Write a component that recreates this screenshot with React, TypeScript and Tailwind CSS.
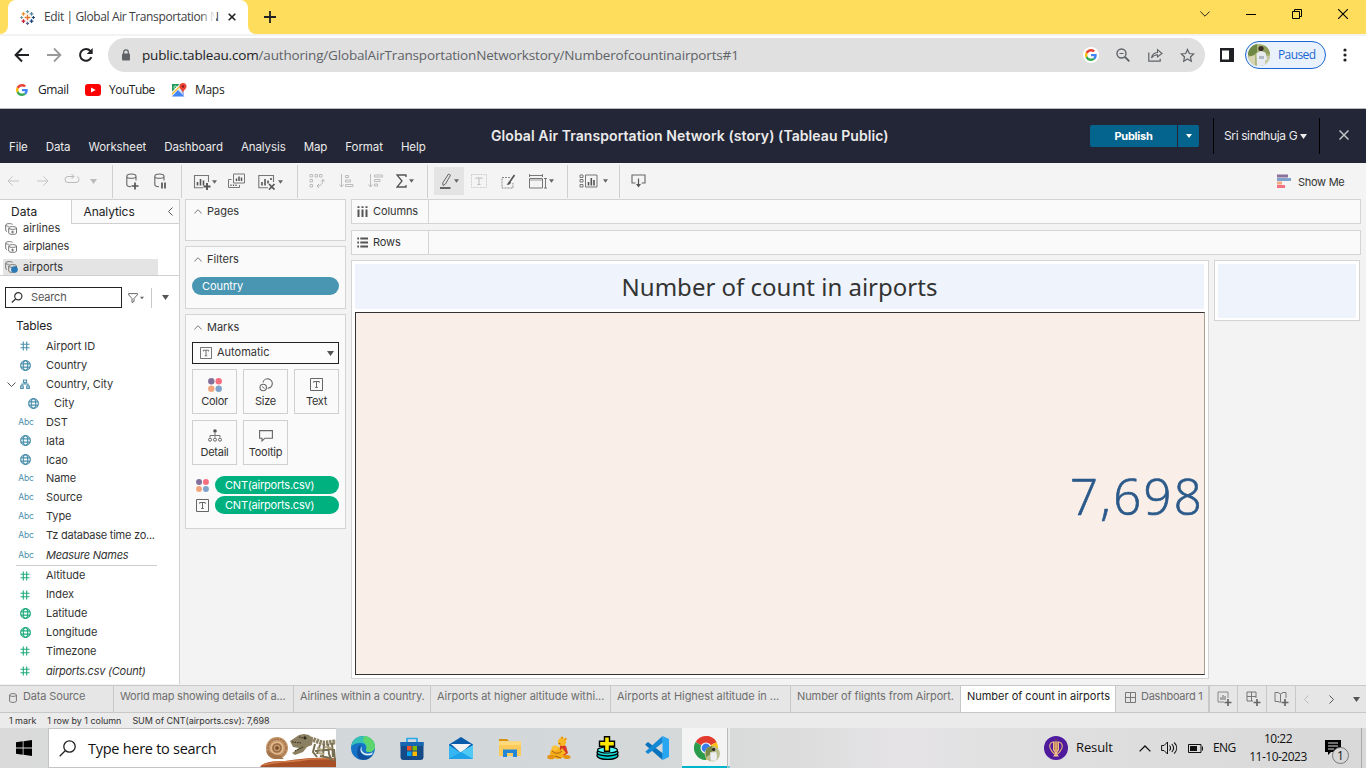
import React from "react";

type SvgProps = { w: number; h: number; vb?: string; className?: string; children: React.ReactNode };

const Svg = ({ w, h, vb, className = "", children }: SvgProps) => (
  <svg width={w} height={h} viewBox={vb ?? `0 0 ${w} ${h}`} fill="none" className={`shrink-0 ${className}`}>
    {children}
  </svg>
);

const GoogleG = ({ size }: { size: number }) => (
  <Svg w={size} h={size} vb="0 0 48 48">
    <path fill="#EA4335" d="M24 9.5c3.54 0 6.71 1.22 9.21 3.6l6.85-6.85C35.9 2.38 30.47 0 24 0 14.62 0 6.51 5.38 2.56 13.22l7.98 6.19C12.43 13.72 17.74 9.5 24 9.5z" />
    <path fill="#4285F4" d="M46.98 24.55c0-1.57-.15-3.09-.38-4.55H24v9.02h12.94c-.58 2.96-2.26 5.48-4.78 7.18l7.73 6c4.51-4.18 7.09-10.36 7.09-17.65z" />
    <path fill="#FBBC05" d="M10.53 28.59c-.48-1.45-.76-2.99-.76-4.59s.27-3.14.76-4.59l-7.98-6.19C.92 16.46 0 20.12 0 24c0 3.88.92 7.54 2.56 10.78l7.97-6.19z" />
    <path fill="#34A853" d="M24 48c6.48 0 11.93-2.13 15.89-5.81l-7.73-6c-2.15 1.45-4.92 2.3-8.16 2.3-6.26 0-11.57-4.22-13.47-9.91l-7.98 6.19C6.51 42.62 14.62 48 24 48z" />
  </Svg>
);

const Caret = ({ color = "#666", w = 5 }: { color?: string; w?: number }) => (
  <Svg w={w} h={4} vb="0 0 6 4">
    <path d="M0 0h6L3 4z" fill={color} />
  </Svg>
);

/* ---------- Browser ---------- */

const TableauMark = () => (
  <Svg w={15} h={15} vb="0 0 16 16">
    <path d="M8 5v6M5 8h6" stroke="#e8762d" strokeWidth="1.5" />
    <path d="M8 0v3.4M6.3 1.7h3.4" stroke="#7199a6" strokeWidth="1.2" />
    <path d="M8 12.6V16M6.3 14.3h3.4" stroke="#5b6591" strokeWidth="1.2" />
    <path d="M1.7 6.3v3.4M0 8h3.4" stroke="#7199a6" strokeWidth="1.2" />
    <path d="M14.3 6.3v3.4M12.6 8H16" stroke="#1f457e" strokeWidth="1.2" />
    <path d="M3.7 2.2v4M1.7 4.2h4" stroke="#eb912c" strokeWidth="1.3" />
    <path d="M12.3 2.2v4M10.3 4.2h4" stroke="#59879b" strokeWidth="1.3" />
    <path d="M3.7 9.8v4M1.7 11.8h4" stroke="#c72035" strokeWidth="1.4" />
    <path d="M12.3 9.8v4M10.3 11.8h4" stroke="#1f457e" strokeWidth="1.4" />
  </Svg>
);

const TabStrip = () => (
  <div className="flex h-[34px] bg-[#ffdd5c]">
    <Svg w={8} h={34}><path d="M8 26v8H0a8 8 0 0 0 8-8" fill="#fff" /></Svg>
    <div className="flex w-[240px] items-center rounded-t-lg bg-white pl-3">
      <TableauMark />
      <div className="relative ml-[9px] w-[172px] whitespace-nowrap text-[12px] tracking-[-0.38px] text-[#3c4043]">
        Edit | Global Air Transportation N
        <div className="absolute inset-y-0 right-0 w-[14px] bg-gradient-to-r from-white/20 to-white" />
      </div>
      <Svg w={8} h={8} className="ml-[12px]"><path d="M.7.7l6.6 6.6M7.3.7L.7 7.3" stroke="#202124" strokeWidth="1.6" /></Svg>
    </div>
    <Svg w={8} h={34}><path d="M0 26v8h8a8 8 0 0 1-8-8" fill="#fff" /></Svg>
    <Svg w={12} h={34} className="ml-[8px]"><path d="M6 11v12M0 17h12" stroke="#202124" strokeWidth="1.8" /></Svg>
    <div className="ml-auto flex h-[28px] items-center pr-[18px]">
      <Svg w={10} h={6} className="mr-[36px]"><path d="M.3.5L5 5.2 9.7.5" stroke="#222" /></Svg>
      <Svg w={10} h={10} className="mr-[36px]"><path d="M0 5.5h10" stroke="#000" /></Svg>
      <Svg w={10} h={10} className="mr-[36px]"><path d="M.5 2.5h7v7h-7zM2.5 2.5v-2h7v7h-2" stroke="#000" /></Svg>
      <Svg w={10} h={10}><path d="M0 0l10 10M10 0L0 10" stroke="#000" strokeWidth="1.1" /></Svg>
    </div>
  </div>
);

const Avatar = ({ size }: { size: number }) => (
  <Svg w={size} h={size} vb="0 0 22 22" className="rounded-full">
    <rect width="22" height="22" fill="#a9b577" />
    <path d="M0 0h9v8L4 13 0 11z" fill="#6f8745" />
    <path d="M14 2h8v8h-6z" fill="#8c9b5a" />
    <path d="M0 13l7-2v11H0z" fill="#d8d5b4" />
    <path d="M16 12h6v10h-6z" fill="#c9c9a4" />
    <circle cx="13" cy="4.5" r="2.6" fill="#3a2c27" />
    <path d="M8.5 9.5l4-2.5 5 1.5 1.5 7-2 1v6H9z" fill="#e8ebf2" />
    <path d="M11 12h5v3h-5z" fill="#b3b8c5" />
  </Svg>
);

const AddressBar = () => (
  <div className="flex h-[38px] items-center bg-white">
    <Svg w={16} h={16} className="ml-[14px]"><path d="M15 8H2M8 1.5L1.6 8 8 14.5" stroke="#202124" strokeWidth="2" /></Svg>
    <Svg w={16} h={16} className="ml-[16px]"><path d="M1 8h13M8 1.5L14.4 8 8 14.5" stroke="#9a9a9a" strokeWidth="1.8" /></Svg>
    <Svg w={16} h={16} className="ml-[16px]">
      <path d="M13.4 10.2A5.9 5.9 0 1 1 12.4 4" stroke="#202124" strokeWidth="2" />
      <path d="M14.7 1v6H8.7z" fill="#202124" />
    </Svg>
    <div className="ml-[14px] flex h-[34px] w-[1097px] items-center rounded-full bg-[#e0e0e0] pl-[13px] pr-[10px]">
      <Svg w={10} h={12}><rect x="1" y="4.5" width="8" height="7" rx="1" fill="#5f6368" /><path d="M2.7 5V3.1a2.3 2.3 0 0 1 4.6 0V5" stroke="#5f6368" strokeWidth="1.3" /></Svg>
      <div className="ml-[11px] whitespace-nowrap text-[13.5px] tracking-[-0.17px] text-[#5f6368]">
        <span className="text-[#202124]">public.tableau.com</span>/authoring/GlobalAirTransportationNetworkstory/Numberofcountinairports#1
      </div>
      <div className="ml-auto flex h-4 w-4 items-center justify-center rounded-full bg-white"><GoogleG size={12} /></div>
      <Svg w={14} h={14} className="ml-[17px]">
        <circle cx="5.5" cy="5.5" r="4.5" stroke="#5f6368" strokeWidth="1.4" />
        <path d="M9 9l4.3 4.3" stroke="#5f6368" strokeWidth="1.9" /><path d="M3.5 5.5h4" stroke="#5f6368" />
      </Svg>
      <Svg w={15} h={14} className="ml-[18px]">
        <path d="M.8 4.5v8.7h11.4v-2.5" stroke="#5f6368" strokeWidth="1.2" />
        <path d="M3.5 10c.5-3.8 2.6-5.3 6-5.5V1.7L14 5.5 9.5 9V6.8C7 6.9 5 7.8 3.5 10z" stroke="#5f6368" strokeWidth="1.1" />
      </Svg>
      <Svg w={15} h={15} className="ml-[17px]" vb="0 0 24 24">
        <path d="M12 2.5l2.9 6.3 6.9.8-5.1 4.7 1.4 6.8L12 17.7l-6.1 3.4 1.4-6.8L2.2 9.6l6.9-.8z" stroke="#5f6368" strokeWidth="2" />
      </Svg>
    </div>
    <Svg w={14} h={14} className="ml-[15px]"><path d="M0 0h14v14H0z" fill="#202124" /><path d="M2 2.5h7v9H2z" fill="#fff" /></Svg>
    <div className="ml-[11px] flex h-7 w-[81px] items-center rounded-full border border-[#1a66d2] bg-[#e9f1fc] pl-[2px]">
      <Avatar size={22} />
      <div className="ml-2 text-xs tracking-[-0.6px] text-[#1a66d2]">Paused</div>
    </div>
    <Svg w={4} h={14} className="ml-[17px]"><circle cx="2" cy="2" r="1.6" fill="#202124" /><circle cx="2" cy="7" r="1.6" fill="#202124" /><circle cx="2" cy="12" r="1.6" fill="#202124" /></Svg>
  </div>
);

const Bookmarks = () => (
  <div className="flex h-[37px] items-center border-b border-[#b9babd] bg-white pl-[16px] text-xs text-[#202124]">
    <GoogleG size={12} />
    <div className="ml-[10px] w-[47px] tracking-[-0.4px]">Gmail</div>
    <Svg w={16} h={12}><rect width="16" height="12" rx="3" fill="#f00" /><path d="M6 3.4v5.2L10.7 6z" fill="#fff" /></Svg>
    <div className="ml-[8px] w-[63px] tracking-[-0.5px]">YouTube</div>
    <Svg w={15} h={14}>
      <rect x="0" y="1" width="12" height="12.5" rx="1" fill="#e8eaed" />
      <path d="M0 1h7.5L0 8.5z" fill="#1e9b57" /><path d="M0 13.5L6 7l6.5 6.5z" fill="#4285f4" /><path d="M0 11L9.5 2" stroke="#fbc02d" strokeWidth="1.2" />
      <path d="M8 5.5l4 4v4z" fill="#9ab5e8" />
      <path d="M11 0a3.5 3.5 0 0 1 3.5 3.5C14.5 6 11 7 11 10.5 11 7 7.5 6 7.5 3.5A3.5 3.5 0 0 1 11 0z" fill="#ea4335" /><circle cx="11" cy="3.5" r="1.2" fill="#8c1d18" />
      <circle cx="3.3" cy="4.3" r="1.3" stroke="#fff" strokeWidth=".8" />
    </Svg>
    <div className="ml-[8px] tracking-[-0.3px]">Maps</div>
  </div>
);

/* ---------- Tableau header ---------- */

const Header = () => (
  <div className="flex h-[54px] bg-[#232636] text-[12px] text-[#ebebeb]">
    <div className="flex w-[491px] items-end gap-[18px] whitespace-nowrap pb-[7px] pl-[9px] text-[11.5px] leading-[18px] tracking-[-0.08px]">
      <span>File</span><span>Data</span><span>Worksheet</span><span>Dashboard</span>
      <span>Analysis</span><span>Map</span><span>Format</span><span>Help</span>
    </div>
    <div className="flex w-[599px] items-center whitespace-nowrap pb-[2px] text-[14px] font-semibold tracking-[0.08px]">Global Air Transportation Network (story) (Tableau Public)</div>
    <div className="flex flex-1 items-center">
      <div className="flex h-[22px] w-[87px] items-center justify-center rounded-l-[2px] bg-[#05648d] text-[11px] font-bold tracking-[-0.25px] text-white">Publish</div>
      <div className="ml-px flex h-[22px] w-[21px] items-center justify-center rounded-r-[2px] bg-[#05648d]"><Caret color="#fff" w={6} /></div>
      <div className="ml-[14px] h-9 w-px bg-black" />
      <div className="ml-[10px] flex w-[95px] items-center gap-[3px] whitespace-nowrap tracking-[-0.38px]">Sri sindhuja G <Svg w={7} h={5}><path d="M0 0h7L3.5 5z" fill="#ebebeb" /></Svg></div>
      <div className="h-9 w-px bg-black" />
      <Svg w={10} h={10} className="ml-[19px] mb-[2px]"><path d="M.5.5l9 9M9.5.5l-9 9" stroke="#c4c4c8" strokeWidth="1.5" /></Svg>
    </div>
  </div>
);

const Slot = ({ className, children }: { className: string; children: React.ReactNode }) => (
  <div className={`flex h-7 shrink-0 items-center justify-center gap-[2px] ${className}`}>{children}</div>
);
const Rule = ({ className = "" }: { className?: string }) => <div className={`h-[33px] w-px shrink-0 bg-[#d0d0d0] ${className}`} />;

const Cylinder = ({ children }: { children: React.ReactNode }) => (
  <Svg w={13} h={17}>
    <path d="M10 7.5V3.2C10 1.9 8 1 5.4 1S.8 1.9.8 3.2v8.3c0 1.3 1.7 2.2 4.2 2.2M.8 3.2c0 1.2 2 2.1 4.6 2.1s4.6-.9 4.6-2.1" stroke="#666" strokeWidth="1.1" />
    {children}
  </Svg>
);

const Toolbar = () => (
  <div className="flex h-[36px] items-center bg-[#f4f4f4]">
    <Slot className="w-[26px]"><Svg w={12} h={10}><path d="M12 5H1M5.5.5L1 5l4.5 4.5" stroke="#c4c4c4" /></Svg></Slot>
    <Slot className="w-[34px]"><Svg w={12} h={10}><path d="M0 5h11M6.5.5L11 5 6.5 9.5" stroke="#c4c4c4" /></Svg></Slot>
    <Slot className="w-[24px]"><Svg w={16} h={10} className="mb-1"><path d="M10 2.5H4a3 3 0 0 0 0 6h8a3 3 0 0 0 3-3c0-1.5-.8-2.5-2-2.9M7.5 0L10 2.5 7.5 5" stroke="#bbb" /></Svg></Slot>
    <Slot className="w-[19px]"><Svg w={7} h={5}><path d="M0 0h7L3.5 5z" fill="#bbb" /></Svg></Slot>
    <Rule className="ml-[9px]" />
    <Slot className="w-[38px] pt-px"><Cylinder><path d="M9 9.5v7M5.500 13h7" stroke="#555" strokeWidth="1.7" /></Cylinder></Slot>
    <Slot className="w-[19px] pt-px"><Cylinder><path d="M8 9.5v6M11 9.5v6" stroke="#555" strokeWidth="1.7" /></Cylinder></Slot>
    <Rule className="ml-[11px]" />
    <Slot className="w-[44px] pl-px pt-[2px]">
      <Svg w={18} h={16}><path d="M15.500 8V1.5H1.5v12.200H10" stroke="#777" strokeWidth="1.1" /><path d="M4.5 8v3.5M7.500 5v6.5M10.500 6.5v5" stroke="#555" strokeWidth="1.6" /><path d="M14 9v7M10.500 12.500h7" stroke="#555" strokeWidth="1.9" /></Svg>
      <span className="-ml-px flex"><Caret w={5} /></span>
    </Slot>
    <Slot className="w-[22px] pr-px">
      <Svg w={17} h={16}><path d="M5.500 1h11v9h-11z" stroke="#777" /><path d="M8.500 5.500V8M11 3.500V8M13.500 4.500V8" stroke="#555" strokeWidth="1.5" /><path d="M3.500 6.500h-3v8h11V12" stroke="#777" /><path d="M3 11.500V13M5.500 11.500V13M8 11.500V13" stroke="#555" strokeWidth="1.2" /></Svg>
    </Slot>
    <Slot className="w-[46px] pr-px pt-[2px]">
      <Svg w={18} h={16}><path d="M15.500 8V1.500H.8v12.200H10" stroke="#777" strokeWidth="1.1" /><path d="M4 8v3.500M7 5v6.500M10 6.500v3M13 4v2" stroke="#555" strokeWidth="1.6" /><path d="M11 10l5.500 5.500M16.500 10L11 15.500" stroke="#555" strokeWidth="1.7" /></Svg>
      <Caret w={5} />
    </Slot>
    <Rule className="ml-[3px]" />
    <Slot className="w-[38px]">
      <Svg w={16} h={16}><path d="M1 1.5h2.500V4H1zM6 1.500h2.500V4H6zM10.500 1.500H13V4h-2.500zM1 6.500h2.500V9H1zM1 11.500h2.500V14H1z" stroke="#bcbcbc" /><path d="M14 6.500c0 4-2 6.500-6 6.500M12 8.500l2-2 2 2M10 11l-2 2 2 2" stroke="#b5b5b5" /></Svg>
    </Slot>
    <Slot className="w-[20px]">
      <Svg w={15} h={14}><path d="M2.500 0v13M.5 10.500l2 2.500 2-2.500" stroke="#bcbcbc" /><path d="M6.500 1.500h3v2h-3zM6.500 6h5v2h-5zM6.500 10.500h7.500v2H6.500z" stroke="#bcbcbc" /></Svg>
    </Slot>
    <Slot className="w-[38px]">
      <Svg w={15} h={14}><path d="M2.500 0v13M.5 10.500l2 2.500 2-2.500" stroke="#bcbcbc" /><path d="M6.500 1h8v2h-8zM6.500 5.500h5.500v2H6.500zM6.500 10h3v2h-3z" stroke="#bcbcbc" /></Svg>
    </Slot>
    <Slot className="w-[21px]">
      <Svg w={11} h={14}><path d="M10 3V1H1l5 6-5 6h9v-2" stroke="#555" strokeWidth="1.3" /></Svg>
      <Caret w={5} />
    </Slot>
    <Rule className="ml-[12px]" />
    <Slot className="ml-[6px] w-[30px] bg-[#e4e4e4]">
      <Svg w={13} h={16}><path d="M9.500 1l2 1.200L6.500 11 4 12.500 3.800 9.800z" stroke="#666" /><path d="M1 15h10.500" stroke="#555" strokeWidth="1.8" /></Svg>
      <Caret w={5} />
    </Slot>
    <Slot className="w-[30px]">
      <Svg w={16} h={14}><path d="M.5.5h15v13H.5z" stroke="#cfcfcf" strokeDasharray="2 1" /><path d="M5 5V4h6v1M8 4v6.500M6.500 10.500h3" stroke="#bbb" /></Svg>
    </Slot>
    <Slot className="w-[29px]">
      <Svg w={15} h={15}><path d="M9 3.500H1v10.500h11V9" stroke="#888" strokeDasharray="2 1" /><path d="M13.500 1L9 7.500" stroke="#555" strokeWidth="1.7" /><path d="M9 7c-2 0-1.500 2.500-3.500 3.500 2 .8 4.500 0 4.500-2.500z" fill="#555" /></Svg>
    </Slot>
    <Slot className="w-[37px]">
      <Svg w={18} h={15}><path d="M.5 4.500h13V14H.5z" stroke="#777" /><path d="M.5 1.500h13M.5 0v3M13.500 0v3M16.500 4.500V14M15 4.500h3M15 14h3" stroke="#777" /><path d="M1 6h12" stroke="#999" /></Svg>
      <Caret w={5} />
    </Slot>
    <Rule className="ml-[7px]" />
    <Slot className="w-[50px]">
      <Svg w={19} h={14}><path d="M1 1h3v2.500H1zM1 5.500h3V8H1zM1 10.500h3V13H1zM6.500 1H18v12H6.500z" stroke="#777" /><path d="M9.500 8v3.500M12.300 4v7.500M15 6v5.500" stroke="#555" strokeWidth="1.6" /></Svg>
      <span className="w-px" /><Caret w={5} />
    </Slot>
    <Rule className="ml-px" />
    <Slot className="w-[37px]">
      <Svg w={15} h={14}><path d="M4.500 9H1V1h13v8h-3.500" stroke="#666" strokeWidth="1.1" /><path d="M7.500 4.500v7" stroke="#555" strokeWidth="1.2" /><path d="M5 10h5l-2.500 3.500z" fill="#555" /></Svg>
    </Slot>
    <Svg w={14} h={14} className="ml-auto"><path d="M0 .5h11v3H0z" fill="#8a719a" /><path d="M0 4h14v3H0z" fill="#7fa3cc" /><path d="M0 7.500h5v3H0z" fill="#f2a983" /><path d="M0 11h8v3H0z" fill="#f27282" /></Svg>
    <div className="ml-[7px] mt-[2px] w-[68px] whitespace-nowrap text-[11px] tracking-[-0.28px] text-[#333]">Show Me</div>
  </div>
);

/* ---------- Data pane ---------- */

type FieldIcon = "hash" | "globe" | "abc" | "tree";

const FieldGlyph = ({ kind, color }: { kind: FieldIcon; color: string }) => {
  if (kind === "hash")
    return <Svg w={10} h={10}><path d="M3.3.5v9M6.7.5v9M.5 3.3h9M.5 6.7h9" stroke={color} strokeWidth="1.1" /></Svg>;
  if (kind === "globe")
    return <Svg w={11} h={11} vb="0 0 10 10"><circle cx="5" cy="5" r="4.4" stroke={color} strokeWidth="1.1" /><ellipse cx="5" cy="5" rx="2" ry="4.4" stroke={color} /><path d="M.8 3.5h8.4M.8 6.5h8.4" stroke={color} /></Svg>;
  if (kind === "tree")
    return <Svg w={10} h={10}><path d="M3.5 1h3v2.5h-3zM.7 7h2.5v2.4H.7zM6.8 7h2.5v2.4H6.8zM5 3.5V5M2 7V5h6v2" stroke={color} strokeWidth="1.2" /></Svg>;
  return <span className="pl-[2px] text-[8.5px] leading-none tracking-[-0.2px] text-[#4a8fab]">Abc</span>;
};

const Field = ({ kind, label, green, italic, nested, open, tight }: { kind: FieldIcon; label: string; green?: boolean; italic?: boolean; nested?: boolean; open?: boolean; tight?: boolean }) => (
  <div className={`flex h-[18.9px] items-center ${nested ? "pl-[8px]" : ""}`}>
    <div className="flex w-[16px] justify-end">
      {open && <Svg w={9} h={5}><path d="M.5.5l4 4 4-4" stroke="#555" /></Svg>}
    </div>
    <div className="flex w-[18px] items-center justify-center"><FieldGlyph kind={kind} color={green ? "#1eaa7e" : "#4a8fab"} /></div>
    <div className={`ml-[12px] whitespace-nowrap text-[11px] text-[#333] ${tight ? "tracking-[-0.25px]" : "tracking-[-0.08px]"} ${italic ? "italic" : ""}`}>{label}</div>
  </div>
);

const SourceGlyph = ({ active }: { active?: boolean }) => (
  <Svg w={13} h={12}>
    <path d="M2 8.5C1.2 8.3.7 8 .7 7.5V2C.7 1.2 2.3.6 4.3.6c1.5 0 2.800.3 3.3.9M.7 2.2c.3.7 1.5 1.1 3 1.2" stroke="#777" />
    <path d="M3.7 5c0-.8 1.7-1.4 3.9-1.4s3.9.6 3.9 1.4v5c0 .8-1.7 1.4-3.9 1.4S3.7 10.8 3.7 10zM3.7 5c0 .8 1.7 1.4 3.9 1.4s3.9-.6 3.9-1.4M7.6 7.5v3M6.1 9h3" stroke="#777" />
    {active && <circle cx="9.5" cy="8.5" r="3.3" fill="#2b7ab5" />}
  </Svg>
);

const DataPane = () => (
  <div className="flex w-[180px] flex-col border-r border-t border-[#d0d0d0] bg-white">
    <div className="flex h-[24px] text-[12px] text-[#222]">
      <div className="flex w-[71px] items-center pl-[11px]">Data</div>
      <div className="flex flex-1 items-center justify-between border-b border-l border-[#d0d0d0] bg-[#fafafa] pl-[11.5px] pr-[6px] tracking-[-0.1px]">
        Analytics
        <Svg w={5} h={9}><path d="M4.5.5l-4 4 4 4" stroke="#555" /></Svg>
      </div>
    </div>
    <div className="flex h-[52px] flex-col border-b border-[#d0d0d0] text-[11px] text-[#333]">
      <div className="flex h-[10px] shrink-0 items-center gap-[5px] pl-[5px] leading-[11px]"><SourceGlyph /><span className="-mt-px">airlines</span></div>
      <div className="flex h-[25px] shrink-0 items-center gap-[5px] pl-[5px] tracking-[-0.15px]"><SourceGlyph />airplanes</div>
      <div className="ml-[3px] flex h-[16px] w-[155px] shrink-0 items-center gap-[5px] bg-[#e4e4e4] pl-[2px]"><SourceGlyph active />airports</div>
    </div>
    <div className="flex h-[43px] items-center pl-[5px]">
      <div className="flex h-[21px] w-[117px] items-center border border-[#222] pl-[5px] text-[11px] text-[#555]">
        <Svg w={12} h={11}><circle cx="7.3" cy="4.3" r="3.6" stroke="#333" strokeWidth="1.2" /><path d="M4.6 7L.8 10.5" stroke="#333" strokeWidth="1.3" /></Svg>
        <span className="ml-[8px] tracking-[-0.15px]">Search</span>
      </div>
      <Svg w={10} h={10} className="ml-[6px]"><path d="M.6.6h8.8v1.2L6 5.5v3L4 9.5v-4L.6 1.8z" stroke="#666" /></Svg>
      <span className="ml-[2px]"><Caret w={4} /></span>
      <div className="ml-[7px] h-5 w-px bg-[#c9c9c9]" />
      <Svg w={7} h={5} className="ml-[10px]"><path d="M0 0h7L3.5 5z" fill="#555" /></Svg>
    </div>
    <div className="mt-[-2px] flex h-[18px] items-center pl-[16px] text-[12px] tracking-[-0.15px] text-[#222]">Tables</div>
    <div className="h-[2px]" />
    <Field kind="hash" label="Airport ID" />
    <Field kind="globe" label="Country" />
    <Field kind="tree" label="Country, City" open />
    <Field kind="globe" label="City" nested />
    <Field kind="abc" label="DST" />
    <Field kind="globe" label="Iata" />
    <Field kind="globe" label="Icao" />
    <Field kind="abc" label="Name" />
    <Field kind="abc" label="Source" />
    <Field kind="abc" label="Type" />
    <Field kind="abc" label="Tz database time zo..." tight />
    <div className="h-px" />
    <Field kind="abc" label="Measure Names" italic tight />
    <div className="ml-[16px] mb-[0.6px] h-px w-[141px] bg-[#ccc]" />
    <Field kind="hash" label="Altitude" green />
    <Field kind="hash" label="Index" green />
    <Field kind="globe" label="Latitude" green />
    <Field kind="globe" label="Longitude" green />
    <Field kind="hash" label="Timezone" green />
    <div className="h-[0.6px]" />
    <Field kind="hash" label="airports.csv (Count)" green italic tight />
  </div>
);

/* ---------- Shelves ---------- */

const Shelf = ({ title, className, titleHeight = "h-[24px]", children }: { title: string; className: string; titleHeight?: string; children?: React.ReactNode }) => (
  <div className={`flex flex-col border border-[#d4d4d4] bg-[#fafafa] px-[6px] ${className}`}>
    <div className={`flex shrink-0 items-center gap-[5px] pl-[2px] text-[11px] text-[#333] ${titleHeight}`}>
      <Svg w={8} h={5}><path d="M.3 4.5L4 .7l3.7 3.8" stroke="#777" /></Svg>
      {title}
    </div>
    {children}
  </div>
);

const Dots = ({ size }: { size: number }) => (
  <Svg w={size} h={size} vb="0 0 14 14">
    <circle cx="3.3" cy="3.3" r="3.2" fill="#83709a" /><circle cx="10.7" cy="3.3" r="3.2" fill="#f56f80" />
    <circle cx="3.3" cy="10.7" r="3.2" fill="#f2a57d" /><circle cx="10.7" cy="10.7" r="3.2" fill="#7fa3cc" />
  </Svg>
);

const TextMark = ({ size }: { size: number }) => (
  <Svg w={size} h={size} vb="0 0 13 13"><path d="M.5.5h12v12H.5z" stroke="#666" /><path d="M3.7 4.8V3.5h5.6v1.3M6.5 3.5v6M5.2 9.5h2.6" stroke="#666" /></Svg>
);

const MarkCard = ({ label, children }: { label: string; children: React.ReactNode }) => (
  <div className="flex h-[45px] flex-col items-center border border-[#d0d0d0] bg-[#fafafa] pt-[7px] text-[11px] leading-[16px] tracking-[-0.28px] text-[#333]">
    <div className="flex h-[15px] items-center">{children}</div>
    <span className="mt-[0.5px]">{label}</span>
  </div>
);

const MeasurePill = () => (
  <div className="flex h-[18px] w-[124px] items-center rounded-full bg-[#00b180] pl-[10px] text-[11px] tracking-[-0.22px] text-white">CNT(airports.csv)</div>
);

const ShelfColumn = () => (
  <div className="ml-[5px] flex w-[161px] flex-col">
    <Shelf title="Pages" titleHeight="h-[22px]" className="h-[42px]" />
    <Shelf title="Filters" className="mt-[5px] h-[63px]">
      <div className="mt-[6px] flex h-[18px] items-center rounded-full bg-[#4996b2] pl-[10px] text-[11px] tracking-[-0.08px] text-white">Country</div>
    </Shelf>
    <Shelf title="Marks" className="mt-[5px] h-[215px]">
      <div className="mt-[3px] flex h-[22px] shrink-0 items-center border border-[#222] bg-[#fcfcfc] pl-[7px] pr-[4px] text-[11px] text-[#333]">
        <TextMark size={12} /><span className="mb-px ml-[5px]">Automatic</span>
        <Svg w={7} h={5} className="ml-auto"><path d="M0 0h7L3.5 5z" fill="#555" /></Svg>
      </div>
      <div className="mt-[5px] grid grid-cols-3 gap-[6px]">
        <MarkCard label="Color"><Dots size={14} /></MarkCard>
        <MarkCard label="Size"><Svg w={14} h={14}><path d="M4 4.5a4.7 4.7 0 1 1 4.5 5.7" stroke="#666" strokeWidth="1.1" /><circle cx="4.2" cy="9.5" r="3.2" stroke="#666" strokeWidth="1.1" /><path d="M3 8.5l2.5 2" stroke="#666" /></Svg></MarkCard>
        <MarkCard label="Text"><TextMark size={13} /></MarkCard>
        <MarkCard label="Detail"><Svg w={14} h={13}><circle cx="7" cy="2" r="1.8" fill="#555" /><path d="M7 4v4.5M2 8.5v-2h10v2" stroke="#777" /><circle cx="2" cy="10.7" r="1.5" stroke="#666" /><circle cx="7" cy="10.7" r="1.5" stroke="#666" /><circle cx="12" cy="10.7" r="1.5" stroke="#666" /></Svg></MarkCard>
        <MarkCard label="Tooltip"><Svg w={14} h={12}><path d="M.6.6h12.8v7.6H6L3 11V8.2H.6z" stroke="#666" strokeWidth="1.1" /></Svg></MarkCard>
      </div>
      <div className="mt-[11px] flex items-center gap-[6px] pl-[4px]"><Dots size={13} /><MeasurePill /></div>
      <div className="mt-[2px] flex items-center gap-[6px] pl-[4px]"><TextMark size={13} /><MeasurePill /></div>
    </Shelf>
  </div>
);

const AxisShelf = ({ label, children }: { label: string; children: React.ReactNode }) => (
  <div className="flex h-[25px] border border-[#d4d4d4] bg-[#fafafa]">
    <div className="flex w-[77px] items-center gap-[5px] border-r border-[#d4d4d4] pl-[5px] text-[11px] tracking-[-0.1px] text-[#333]">{children}{label}</div>
  </div>
);

const Canvas = () => (
  <div className="ml-[5px] flex w-[1010px] flex-col">
    <AxisShelf label="Columns"><Svg w={11} h={11}><path d="M1.5 3.5V11M5.5 3.5V11M9.5 3.5V11M1.5.3V2M5.5.3V2M9.5.3V2" stroke="#555" strokeWidth="2" /></Svg></AxisShelf>
    <div className="h-[6px]" />
    <AxisShelf label="Rows"><Svg w={11} h={11}><path d="M3.3 1.5H11M3.3 5.5H11M3.3 9.5H11M.3 1.5H2M.3 5.5H2M.3 9.5H2" stroke="#555" strokeWidth="2" /></Svg></AxisShelf>
    <div className="mt-[5px] flex items-start">
      <div className="flex h-[419px] w-[858px] flex-col border border-[#d4d4d4] bg-white p-[3px]">
        <div className="mr-px flex h-[45px] items-center justify-center bg-[#eff3fb] font-['Noto_Sans'] text-[24px] text-[#333]">Number of count in airports</div>
        <div className="mt-[3px] flex h-[363px] items-center justify-end border border-[#333] border-r-[#a59f97] bg-[#f9eee8] font-['Open_Sans'] text-[49px] font-light text-[#2b5a8a]">
          <span className="mt-[7px] tracking-[2.3px] [-webkit-text-stroke:0.7px_#2b5a8a]">7,698</span>
        </div>
      </div>
      <div className="ml-[5px] h-[61px] w-[146px] border border-[#d4d4d4] bg-white p-[3px] pb-[2px]"><div className="h-full w-[138px] bg-[#eff3fb]" /></div>
    </div>
  </div>
);

/* ---------- Sheet tabs and status ---------- */

const SheetTab = ({ className, children }: { className: string; children: React.ReactNode }) => (
  <div className={`flex shrink-0 items-center whitespace-nowrap border-r border-[#c8c8c8] pb-[5px] ${className}`}>{children}</div>
);

const PlusMark = () => <path d="M11 8v7M7.5 11.5h7" stroke="#666" strokeWidth="1.7" />;

const SheetTabs = () => (
  <div className="flex h-[28px] border-b border-t border-[#c8c8c8] bg-[#e6e6e6] text-[11px] tracking-[-0.05px] text-[#6e6e6e]">
    <SheetTab className="w-[114px] gap-[6px] pl-[9px] tracking-[-0.15px]">
      <Svg w={8} h={10} className="mt-[3px]"><path d="M.6 2C.6 1.2 2.1.6 4 .6s3.4.6 3.4 1.4v6C7.4 8.8 5.9 9.4 4 9.4S.6 8.8.6 8zM.6 2c0 .8 1.5 1.4 3.4 1.4S7.4 2.8 7.4 2" stroke="#777" /></Svg>
      Data Source
    </SheetTab>
    <SheetTab className="w-[180px] pl-[6px] tracking-[-0.22px]">World map showing details of a...</SheetTab>
    <SheetTab className="w-[137px] pl-[6px] tracking-[-0.12px]">Airlines within a country.</SheetTab>
    <SheetTab className="w-[180px] pl-[6px]">Airports at higher altitude withi...</SheetTab>
    <SheetTab className="w-[180px] pl-[6px]">Airports at Highest altitude in ...</SheetTab>
    <SheetTab className="w-[170px] pl-[6px] tracking-[-0.1px]">Number of flights from Airport.</SheetTab>
    <SheetTab className="w-[155px] bg-white pl-[6px] tracking-[-0.02px] text-[#222]">Number of count in airports</SheetTab>
    <SheetTab className="w-[93px] gap-[5px] pl-[9px] tracking-[-0.25px]">
      <Svg w={11} h={11} className="mt-[2px]"><path d="M.5.5h10v10H.5zM5.5.5v10M.5 5.5h10" stroke="#777" /></Svg>
      Dashboard 1
    </SheetTab>
    <SheetTab className="w-[29px] border-l pl-[7px]"><Svg w={15} h={15} className="mt-[3px]"><path d="M11 7V1H1v10h6" stroke="#888" /><path d="M4 6v3M6 4v5M8 5v4" stroke="#777" strokeWidth="1.1" /><PlusMark /></Svg></SheetTab>
    <SheetTab className="w-[29px] pl-[8px]"><Svg w={15} h={15} className="mt-[3px]"><path d="M10 7V1H1v9h6M5.500 1v9M1 5.5h9" stroke="#777" /><PlusMark /></Svg></SheetTab>
    <SheetTab className="w-[29px] pl-[7px]"><Svg w={15} h={15} className="mt-[3px]"><path d="M12 7V1.500H9L6.500 3 4 1.500H1v9h3l2.500 1M6.500 3v8" stroke="#777" /><PlusMark /></Svg></SheetTab>
    <div className="flex flex-1 items-center pl-[8px]">
      <Svg w={5} h={9}><path d="M4.5.5l-4 4 4 4" stroke="#bbb" /></Svg>
      <Svg w={5} h={9} className="ml-[20px]"><path d="M.5.5l4 4-4 4" stroke="#555" /></Svg>
      <Svg w={7} h={5} className="ml-[19px]"><path d="M0 0h7L3.5 5z" fill="#555" /></Svg>
    </div>
  </div>
);

const StatusBar = () => (
  <div className="flex h-[15px] items-center gap-[11px] whitespace-nowrap bg-[#ebebeb] pl-[9px] text-[9px] tracking-[-0.05px] text-[#333]">
    <span>1 mark</span><span>1 row by 1 column</span><span>SUM of CNT(airports.csv): 7,698</span>
  </div>
);

/* ---------- Windows taskbar ---------- */

const Fossils = () => (
  <Svg w={76} h={38} className="ml-auto">
    <path d="M0 38c3-5 13-6 25-6 13-2 30-4 51-3v9z" fill="#a84f26" />
    <path d="M3 36c12-4 30-3 40-5s20-1 33-1" stroke="#d07a48" strokeWidth="1.5" />
    <circle cx="17" cy="19" r="11" fill="#c39366" />
    <path d="M6 22a11 11 0 0 0 8 8h10l-5-4z" fill="#a8784c" />
    <circle cx="17" cy="19" r="9" stroke="#9a6e48" strokeWidth="1.3" strokeDasharray="2 1" />
    <circle cx="17" cy="19" r="6" stroke="#e0bb8f" strokeWidth="1.6" />
    <circle cx="17" cy="19" r="4" stroke="#8d6340" strokeWidth="1.2" /><circle cx="17" cy="19" r="1.8" fill="#714b2d" />
    <path d="M30 12l9-6 5-1 5 1 4 4-1 6-5 2-4 5-8 3-3-2 7-5-6-1z" fill="#8b8061" />
    <path d="M32 13l10 1M35 22l8-4M39 8l4 1 3-2" stroke="#3f3827" strokeWidth="1.2" strokeDasharray="1.5 1" />
    <circle cx="45" cy="9" r="1.5" fill="#2e291d" />
    <path d="M50 10c5 0 9 4 14 4s8-1 12-1" stroke="#8b8061" strokeWidth="5" strokeDasharray="2.5 .8" />
    <path d="M55 15l-2 8 4 5M60 16l-3 9M64 15l-1 13M68 15l1 10 3 7M72 14l1 14M60 27l10 2M55 22l18-2M74 20l1 12" stroke="#776d51" strokeWidth="2" />
    <path d="M57 19l5 2M65 18l7 1M58 24l6 1" stroke="#b4a982" strokeWidth="2" />
  </Svg>
);

const ChromeLogo = () => (
  <Svg w={26} h={26}>
    <path d="M12 12L1.6 6A12 12 0 0 1 22.4 6z" fill="#e33b2e" />
    <path d="M12 12L22.4 6A12 12 0 0 1 12 24z" fill="#fbc116" />
    <path d="M12 12v12A12 12 0 0 1 1.6 6z" fill="#2a9a4b" />
    <path d="M12 6.5h10.6A12 12 0 0 0 12 0v6.5z" fill="#e33b2e" />
    <circle cx="12" cy="12" r="5.5" fill="#fff" /><circle cx="12" cy="12" r="4.4" fill="#3b7ded" />
    <g transform="translate(10.5 10) scale(.7)">
      <circle cx="11" cy="11" r="11" fill="#b9bd90" /><path d="M2 5a11 11 0 0 1 9-5v10L2 16z" fill="#778a48" /><circle cx="13" cy="5" r="2.5" fill="#33302a" /><path d="M8 9h9l1 8-2 4H9z" fill="#eceef2" />
    </g>
  </Svg>
);

const TaskIcon = ({ className, children }: { className: string; children: React.ReactNode }) => (
  <div className={`flex h-10 shrink-0 items-center justify-center ${className}`}>{children}</div>
);

const Taskbar = () => (
  <div className="flex h-[40px] bg-[linear-gradient(90deg,#dadada_0%,#d2d7da_28%,#d4d8d9_48%,#dcdcdc_58%,#e5e3e6_66%,#e0e0e0_74%,#d8d8d8_100%)] text-[#111]">
    <TaskIcon className="w-[48px]">
      <Svg w={16} h={16}><path d="M0 2.3l6.7-1v6.3H0zM7.5 1.2L16 0v7.6H7.5zM0 8.4h6.7v6.3l-6.7-1zM7.5 8.4H16V16l-8.5-1.2z" fill="#000" /></Svg>
    </TaskIcon>
    <div className="flex w-[288px] items-center border border-r-0 border-[#c4c4c4] bg-white pl-[10px]">
      <Svg w={17} h={17}><circle cx="10.5" cy="6.5" r="5.7" stroke="#222" strokeWidth="1.3" /><path d="M6.5 10.5L.7 16.3" stroke="#222" strokeWidth="1.3" /></Svg>
      <span className="ml-[12px] mt-px whitespace-nowrap text-[14.5px] tracking-[-0.27px]">Type here to search</span>
      <Fossils />
    </div>
    <TaskIcon className="ml-[2px] w-[49px]">
      <Svg w={24} h={24}>
        <circle cx="12" cy="12" r="12" fill="#1673c5" />
        <path d="M0 11C1 4 6 0 12 0c7 0 12 5 12 10.5 0 3.5-3 5.5-6 5.5-2.5 0-3.5-1.2-3-2.2C16 12 15.5 7 9.5 7 5 7 1.5 8.5 0 11z" fill="#35c1b5" />
        <path d="M13 0c6 .4 11 5 11 10.5 0 3.5-3 5.5-6 5.5-2.5 0-3.5-1.2-3-2.2 1-1.8 1.2-6.3-3-8.3z" fill="#5fd66d" />
        <path d="M8 22.5C5 18 5.5 11 10 8.5c-2 3-1.5 8 2 10.5 3.5 2.2 7.5 1.6 10-.5-3 5-9 6.8-14 4z" fill="#0f4f9c" />
        <path d="M11 10.5c-1.5 3 .5 6.5 4 7 3 .5 5-.3 7-1.5l-1 2.5c-4 1.5-8 1-10.3-1.5-1.8-2-1.5-5.2.3-6.5z" fill="#e6eef3" />
      </Svg>
    </TaskIcon>
    <TaskIcon className="w-[49px]">
      <Svg w={24} h={25}>
        <path d="M7 7V2.5h10V7" stroke="#28a8ea" strokeWidth="1.7" /><path d="M.5 6h23v15a3 3 0 0 1-3 3h-17a3 3 0 0 1-3-3z" fill="#164a86" /><path d="M.5 6h23v4H.5z" fill="#1766b2" />
        <path d="M7 10h4.5v4.5H7z" fill="#f25022" /><path d="M12.5 10H17v4.5h-4.5z" fill="#7fba00" /><path d="M7 15.5h4.5V20H7z" fill="#00a4ef" /><path d="M12.5 15.5H17V20h-4.5z" fill="#ffb900" />
      </Svg>
    </TaskIcon>
    <TaskIcon className="w-[49px]">
      <Svg w={24} h={24}><path d="M0 8.5L12 1l12 7.5V23H0z" fill="#0a5cab" /><path d="M2 8h20l-10 9z" fill="#f3f3f3" /><path d="M0 9l12 8L0 23z" fill="#35b6f2" /><path d="M24 9v14H0l12-7z" fill="#1fa2e8" /><path d="M12 16l12 7V9z" fill="#50c8f4" /></Svg>
    </TaskIcon>
    <TaskIcon className="w-[49px] pl-px">
      <Svg w={22} h={20}><path d="M0 1h8l2 2H0z" fill="#d8920c" /><path d="M0 3.5h22V18H0z" fill="#fccb5b" /><path d="M0 3.5h22V7H0z" fill="#ffda7a" /><path d="M4 11.5h14V19h-4v-4H8v4H4z" fill="#2486d6" /></Svg>
    </TaskIcon>
    <TaskIcon className="w-[49px]">
      <Svg w={24} h={24}>
        <ellipse cx="11" cy="17" rx="8" ry="6" fill="#f6ae1a" /><path d="M13 8l6 2 2 7-4 3-4-6z" fill="#d93a25" /><path d="M15 12l4 5-3 2-3-4z" fill="#f9b824" /><circle cx="15" cy="6" r="4" fill="#f9b824" /><circle cx="15" cy="1.6" r="1.2" fill="#e89a10" /><circle cx="18.5" cy="3" r="1.2" fill="#e89a10" />
        <ellipse cx="8" cy="12" rx="3.5" ry="2.5" fill="#fbc33a" /><ellipse cx="4" cy="21" rx="3.7" ry="2.3" fill="#e69312" /><ellipse cx="20" cy="21" rx="3.5" ry="2" fill="#e69312" /><path d="M5 15c3 3 7 3 10 0M11.500 7l2 1M8 20l6 2" stroke="#a5620d" />
      </Svg>
    </TaskIcon>
    <TaskIcon className="w-[49px]">
      <Svg w={23} h={24}>
        <ellipse cx="11.5" cy="19.5" rx="10.5" ry="4" fill="#0cc" stroke="#000" strokeWidth="1.3" /><ellipse cx="11.5" cy="16.5" rx="10.5" ry="3.5" fill="#1fdede" stroke="#000" strokeWidth="1.3" /><ellipse cx="11.5" cy="14" rx="10" ry="3" fill="#5ff" stroke="#000" strokeWidth="1.2" />
        <path d="M8.500.7h5v4.500h5v5h-5v5h-5v-5h-5v-5h5z" fill="#ffe800" stroke="#000" strokeWidth="1.4" />
      </Svg>
    </TaskIcon>
    <TaskIcon className="w-[49px]">
      <Svg w={24} h={24}><path d="M17.5 24L1 9.5.3 8.2 3 6l15 11.5z" fill="#0a72bd" /><path d="M17.5 0L.3 15.8 3 18 18 6.5z" fill="#1488d4" /><path d="M17.5 0L24 3v18l-6.5 3z" fill="#2aa5f1" /></Svg>
    </TaskIcon>
    <div className="ml-px flex w-[45px] flex-col items-center bg-[#f4f4f4]">
      <div className="flex h-[38px] items-center pl-[4px] pt-[4px]"><ChromeLogo /></div>
      <div className="h-[2px] w-full bg-[#00b5c9]" />
    </div>
    <div className="flex w-[3px] flex-col border-l border-[#bbb] bg-[#e9e9e9]"><div className="mt-auto h-[2px] bg-[#69ccd6]" /></div>
    <div className="ml-auto flex items-center pr-[4px]">
      <Svg w={24} h={24}><circle cx="12" cy="12" r="12" fill="#4f1a9c" /><path d="M9 5.500h6V14l-1.500 2v2.500l1.500 2H9l1.500-2V16L9 14z" fill="#f0c08d" /><path d="M9 6C5.500 6.500 5 11 6.500 13s2 4 4 5M15 6c3.500.5 4 5 2.500 7s-2 4-4 5" stroke="#e8b178" strokeWidth="1.2" /><path d="M12 3v13M10.500 6v8M13.500 6v8" stroke="#a86a40" strokeWidth=".7" /></Svg>
      <span className="ml-[8px] w-[63px] text-[13px] tracking-[-0.1px]">Result</span>
      <Svg w={12} h={7}><path d="M.6 6.4L6 1l5.4 5.4" stroke="#111" strokeWidth="1.3" /></Svg>
      <Svg w={17} h={14} className="ml-[10px]"><path d="M.6 4.5h2.5L6.5 1v12L3 9.5H.6z" stroke="#111" /><path d="M8.5 4.5c1.3 1.5 1.3 3.5 0 5M10.8 3c2.2 2.4 2.2 5.6 0 8M13.2 1.5c3.2 3.3 3.2 7.7 0 11" stroke="#111" strokeWidth="1.1" /></Svg>
      <Svg w={15} h={9} className="ml-[10px]"><path d="M.5.5h12.5v8H.5zM14.500 2.5v4" stroke="#111" /><path d="M2 2h7v5H2z" fill="#111" /></Svg>
      <span className="ml-[10px] w-[24px] text-[12px] tracking-[-0.6px]">ENG</span>
      <div className="ml-[10px] flex w-[62px] flex-col items-center whitespace-nowrap text-[12px] leading-[18px] tracking-[-0.5px]"><span>10:22</span><span>11-10-2023</span></div>
      <Svg w={25} h={25} className="ml-[16px] mt-[8px]">
        <path d="M0 0h16v12H6l-3 3v-3H0z" fill="#000" /><path d="M3 3h10M3 6h10M3 9h6" stroke="#ddd" strokeWidth="1.1" />
        <circle cx="15.5" cy="15.5" r="8" fill="#d7d7d7" stroke="#777" /><text x="15.5" y="20" textAnchor="middle" fontSize="12" fill="#111">1</text>
      </Svg>
      <div className="ml-[11px] h-10 w-px bg-[#aaa]" />
    </div>
  </div>
);

export default function App() {
  return (
    <div className="h-[768px] w-[1366px] overflow-hidden bg-[#f3f3f3] font-['Open_Sans',sans-serif]">
      <TabStrip />
      <div className="h-[38px] pt-[2px]"><AddressBar /></div>
      <Bookmarks />
      <div className="font-['Inter',sans-serif]">
        <Header />
        <Toolbar />
        <div className="flex h-[485px]"><DataPane /><ShelfColumn /><Canvas /></div>
        <div className="h-px" />
        <SheetTabs />
        <StatusBar />
      </div>
      <Taskbar />
    </div>
  );
}
